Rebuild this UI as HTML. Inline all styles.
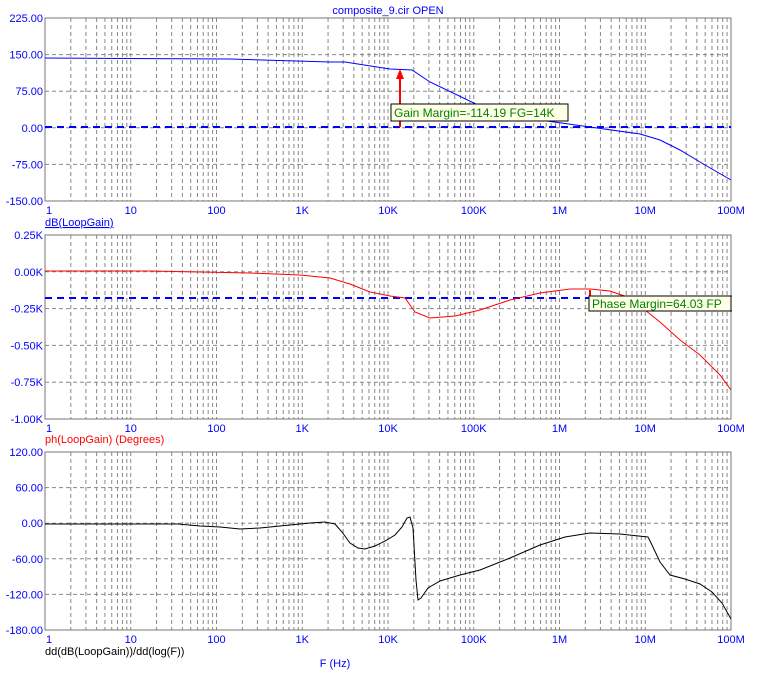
<!DOCTYPE html>
<html><head><meta charset="utf-8"><style>
html,body{margin:0;padding:0;background:#fff;width:758px;height:681px;overflow:hidden}
svg{display:block;font-family:"Liberation Sans",sans-serif;font-size:11px}
</style></head><body>
<svg id="s" width="758" height="681" xmlns="http://www.w3.org/2000/svg">
<defs><clipPath id="c"><rect x="0" y="0" width="732" height="681"/></clipPath></defs>
<text x="388" y="14" fill="#0000ff" text-anchor="middle">composite_9.cir OPEN</text>
<g id="g"></g>
<line x1="45" y1="127" x2="731" y2="127" stroke="#0000ff" stroke-width="2" stroke-dasharray="7,5"/>
<polyline fill="none" stroke="#0000ff" points="45,58 230,59 330,62 345,62 390,69 412,70 430,82 478,105 540,120 590,127 640,134 660,140 680,150 705,165 731,180"/>
<line x1="400" y1="127" x2="400" y2="76" stroke="#f00" stroke-width="2"/>
<polygon points="400,69 396,79 404,79" fill="#f00"/>
<rect x="391" y="104" width="177" height="17" fill="#ffffe8" stroke="#000"/>
<text x="394" y="117" fill="#008000" font-size="12">Gain Margin=-114.19 FG=14K</text>
<line x1="45" y1="298" x2="590" y2="298" stroke="#0000ff" stroke-width="2" stroke-dasharray="7,5"/>
<polyline fill="none" stroke="#f00" points="45,271 150,271 250,273 300,275 330,278 350,284 370,292 390,296 405,298 415,312 430,318 455,316 480,310 510,300 540,293 570,289 590,289 610,291 630,298 645,310 660,322 680,340 700,355 720,375 731,390"/>
<line x1="590" y1="298" x2="590" y2="290" stroke="#f00" stroke-width="2"/>
<g clip-path="url(#c)">
<rect x="589" y="296" width="160" height="15" fill="#ffffe8" stroke="#000"/>
<text x="592" y="308" fill="#008000" font-size="12">Phase Margin=64.03 FP</text>
</g>
<line x1="731" y1="296" x2="731" y2="311" stroke="#000"/>
<polyline fill="none" stroke="#000" points="45,524 178,524 200,526 220,527 240,529 260,528 290,525 310,523 325,522 335,524 342,532 350,543 358,548 365,549 375,546 385,541 395,535 402,527 407,518 410,517 413,528 416,580 418,600 421,598 428,588 440,581 460,575 480,570 510,558 540,545 565,537 590,533 620,534 648,537 652,545 660,562 670,575 685,579 700,584 712,592 722,603 731,619"/>
<text x="335" y="667" fill="#0000ff" text-anchor="middle">F (Hz)</text>
<text x="45" y="226" fill="#0000ff" text-decoration="underline">dB(LoopGain)</text>
<text x="45" y="443" fill="#f00">ph(LoopGain) (Degrees)</text>
<text x="45" y="655" fill="#000">dd(dB(LoopGain))/dd(log(F))</text>
</svg>
<script>
var g=document.getElementById('g'),h='';
var plots=[[18,201,['225.00','150.00','75.00','0.00','-75.00','-150.00']],
[235,419,['0.25K','0.00K','-0.25K','-0.50K','-0.75K','-1.00K']],
[452,630,['120.00','60.00','0.00','-60.00','-120.00','-180.00']]];
var X0=45,X1=731,D=(X1-X0)/8,xl=['1','10','100','1K','10K','100K','1M','10M','100M'];
plots.forEach(function(p){var t=p[0],b=p[1],n=p[2].length-1,st=(b-t)/n;
for(var d=0;d<8;d++)for(var k=2;k<10;k++){var x=X0+D*(d+Math.log10(k));h+='<line x1="'+x+'" y1="'+t+'" x2="'+x+'" y2="'+b+'" stroke="#888" stroke-dasharray="4,3"/>';}
for(var d=1;d<8;d++){var x=X0+D*d;h+='<line x1="'+x+'" y1="'+t+'" x2="'+x+'" y2="'+b+'" stroke="#888" stroke-dasharray="4,3"/>';}
for(var i=1;i<n;i++){var y=t+st*i;h+='<line x1="'+X0+'" y1="'+y+'" x2="'+X1+'" y2="'+y+'" stroke="#888" stroke-dasharray="4,3"/>';}
h+='<rect x="'+X0+'" y="'+t+'" width="'+(X1-X0)+'" height="'+(b-t)+'" fill="none" stroke="#777"/>';
for(var i=0;i<=n;i++){var y=t+st*i+4;h+='<text x="43" y="'+y+'" fill="#0000ff" text-anchor="end">'+p[2][i]+'</text>';}
for(var d=0;d<=8;d++){var x=X0+D*d;h+='<text x="'+(d==0?x+1:x)+'" y="'+(b+13)+'" fill="#0000ff" text-anchor="'+(d==0?'start':'middle')+'">'+xl[d]+'</text>';}
});
g.innerHTML=h;
</script>
</body></html>
